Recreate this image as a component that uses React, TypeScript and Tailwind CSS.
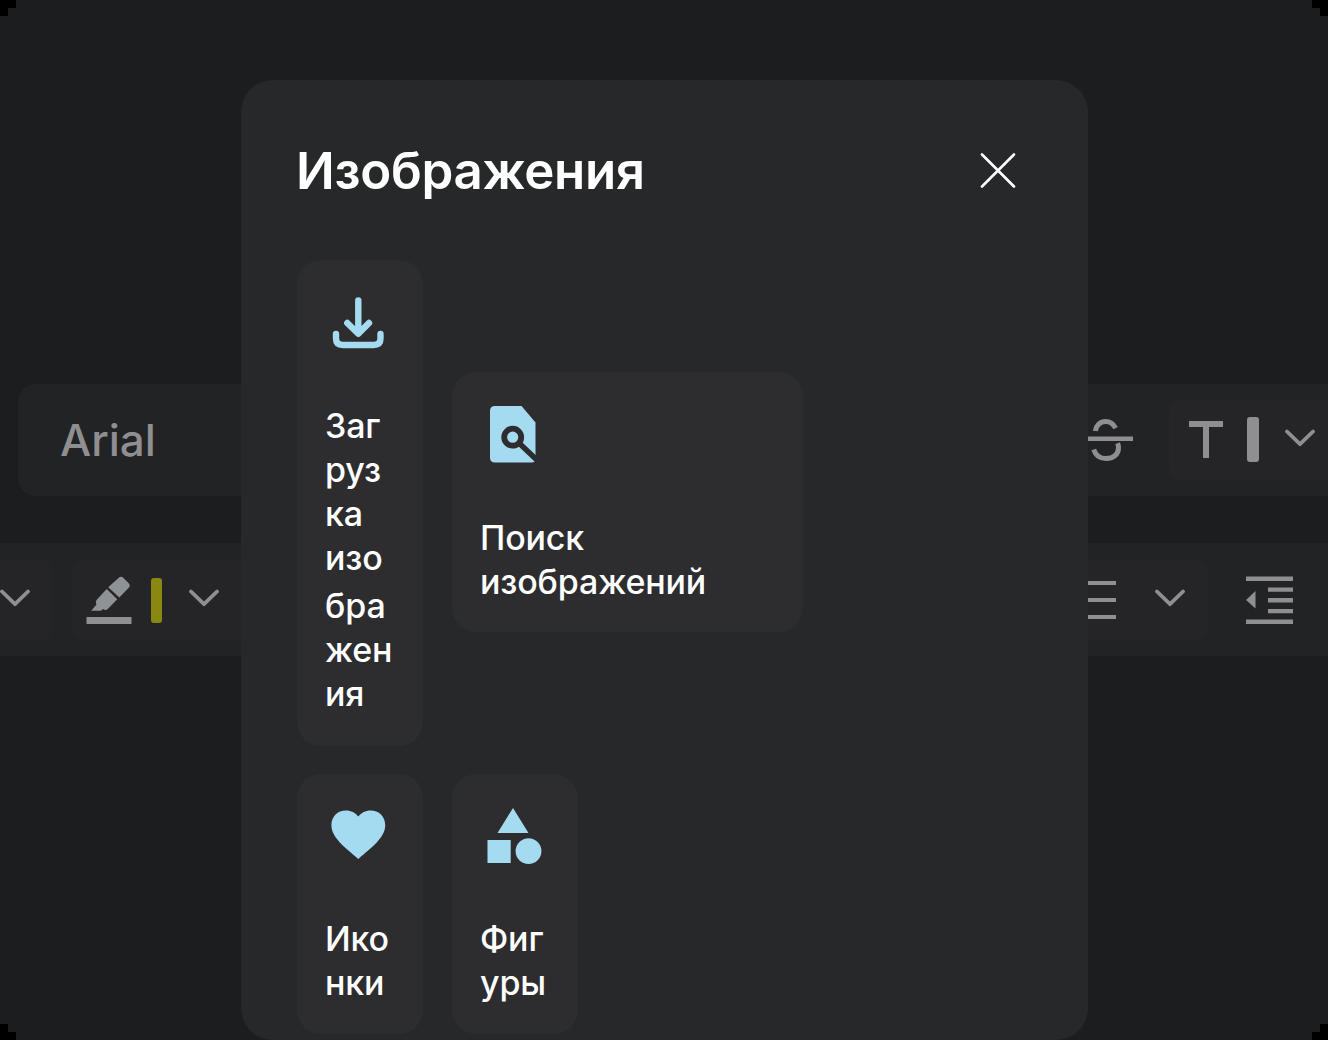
import type { ReactNode } from "react";

const Chevron = () => (
  <svg className="h-[18px] w-[32px] shrink-0" viewBox="0 0 32 18" fill="none" stroke="#8f8f91" strokeWidth="3.8" strokeLinecap="round" strokeLinejoin="round">
    <path d="M3 2.500 16 15.200 29 2.500" />
  </svg>
);

const Strike = () => (
  <svg className="mb-[3px] h-[48px] w-[50px] shrink-0" viewBox="0 0 50 48" fill="none" stroke="#8f8f91" strokeWidth="5">
    <path d="M0 23.700h50" strokeWidth="4.500" />
    <path d="M12.300 16c.8-5.600 5-9.500 10.200-9.500 4.600 0 7.800 2.200 10.100 6.600M10.700 34.500c1.800 5.500 6.300 9.100 12.300 9.100 7.400 0 12.500-4.300 12.500-10.600 0-1.800-.3-3.300-.9-4.800" />
  </svg>
);

const LetterT = () => (
  <svg className="h-[37px] w-[34px] shrink-0" viewBox="0 0 34 37" fill="#8f8f91">
    <path d="M0 0h34v6H20v31h-6V6H0z" />
  </svg>
);

const Marker = () => (
  <svg className="h-[48px] w-[46px] shrink-0" viewBox="0 0 46 48">
    <path d="M32.500 2a3.500 3.500 0 0 1 5 0l5 5a3.500 3.500 0 0 1 0 5L33.300 21.500 22.200 11.300z" fill="#8f9294" />
    <path d="M20.700 13 31.300 23.300 22 32.800q-2.500 2.300-5 .2L15 34.700H5.200l5.300-6.300q-1.600-2.800.7-5.200z" fill="#8f9294" />
    <path d="M.5 41h45v7H.5z" fill="#8f8f91" />
  </svg>
);

const Outdent = () => (
  <svg className="h-[48px] w-[47px] shrink-0" viewBox="0 0 47 48" fill="#8f8f91">
    <path d="M0 .500h47V5H0zM22 11.500h25v4.200H22zM22 22h25v4.500H22zM22 33h25v4.200H22zM0 43.500h47V48H0zM0 24l9.500-9v17.500z" />
  </svg>
);

const DownloadIcon = () => (
  <svg className="h-[60px] w-[60px]" viewBox="0 0 60 60" fill="none" stroke="#a5dbf1" strokeWidth="6.400" strokeLinecap="round" strokeLinejoin="round">
    <path d="M30.300 8.500V40M19.300 31 30.300 41.800 41 31M8 42v4.500q0 6.500 7 6.500h30.500q7 0 7-6.500V42" />
    <path d="M25 37h10.500l-5.200 5z" fill="#a5dbf1" strokeWidth="2" />
  </svg>
);

const PageSearchIcon = () => (
  <svg className="h-[60px] w-[60px]" viewBox="0 0 60 60">
    <path d="M12 2h26.500L52.500 18.500V55q0 3.500-4 3.500H12q-5 0-5-5V7q0-5 5-5z" fill="#a5dbf1" />
    <circle cx="29.700" cy="33.200" r="8.500" fill="none" stroke="#2d2d2f" strokeWidth="5.800" />
    <path d="m36 39 20 19" stroke="#2d2d2f" strokeWidth="5.500" />
  </svg>
);

const HeartIcon = () => (
  <svg className="h-[60px] w-[60px]" viewBox="0 0 60 60" fill="#a5dbf1">
    <path d="M30.300 57C17 45 3.400 36 3.400 23 3.400 14.500 9.600 8.500 18 8.500c5 0 9.500 2.200 12.300 6C33.200 10.700 37.700 8.500 42.500 8.500 51 8.500 57.200 14.500 57.200 23c0 13-13.500 22-26.900 34z" />
  </svg>
);

const ShapesIcon = () => (
  <svg className="h-[60px] w-[60px] overflow-visible" viewBox="0 0 60 60" fill="#a5dbf1">
    <path d="M30 6 45.500 31h-31zM4.500 38h23.200v23H4.500z" />
    <circle cx="45.500" cy="49.200" r="12.900" />
  </svg>
);

type TileProps = { icon: ReactNode; lines: string[]; className: string; labelClass: string };

const Tile = ({ icon, lines, className, labelClass }: TileProps) => (
  <button className={`flex flex-col items-start rounded-[24px] bg-[#2d2d2f] px-[28px] text-left text-[34px] font-[450] leading-[44px] tracking-[-0.15px] text-white ${className}`}>
    <span className="ml-[3px] flex">{icon}</span>
    <span className={`flex flex-col whitespace-nowrap ${labelClass}`}>
      {lines.map((line) => (
        <span key={line} className={line === "бра" ? "pt-[4px]" : ""}>
          {line}
        </span>
      ))}
    </span>
  </button>
);

export default function App() {
  return (
    <main className="relative h-[1040px] w-[1328px] overflow-hidden bg-[#1c1d1e] font-['Inter',sans-serif]">
      <div className="flex flex-col gap-[47px] pt-[384px]">
        <div className="flex h-[112px] justify-between pl-[18px]">
          <div className="flex w-[400px] items-center rounded-[18px] bg-[#222325] pl-[42px] text-[44px] font-[450] text-[#8f8f91]">
            Arial
          </div>
          <div className="flex w-[328px] items-center bg-[#222325] pl-[83px]">
            <Strike />
            <div className="ml-[36px] flex h-[80px] grow items-center rounded-l-[10px] bg-[#252527] pb-[1px] pl-[20px]">
              <LetterT />
              <span className="ml-[24px] h-[45px] w-[12px] shrink-0 rounded-[3px] bg-[#8f8f91]" />
              <span className="mb-[4px] ml-[25px] flex">
                <Chevron />
              </span>
            </div>
          </div>
        </div>
        <div className="flex h-[113px] items-center justify-between bg-[#222325]">
          <div className="flex items-center gap-[20px]">
            <div className="flex h-[80px] w-[52px] items-center rounded-r-[10px] bg-[#252527] pb-[3px]">
              <span className="ml-[-1px] flex">
                <Chevron />
              </span>
            </div>
            <div className="flex h-[80px] w-[240px] items-center rounded-[10px] bg-[#252527] pl-[14px] pt-[1px]">
              <Marker />
              <span className="ml-[19px] h-[45px] w-[11px] rounded-[3px] bg-[#8b8812]" />
              <span className="mb-[4px] ml-[26px] flex">
                <Chevron />
              </span>
            </div>
          </div>
          <div className="flex items-center pr-[35px]">
            <div className="mr-[38px] flex h-[80px] w-[160px] items-center justify-end rounded-[10px] bg-[#252527] pr-[22px] pt-[1px]">
              <div className="mr-[38px] flex w-[40px] flex-col gap-[13px]">
                <span className="h-[4px] bg-[#8f8f91]" />
                <span className="h-[4px] bg-[#8f8f91]" />
                <span className="h-[4px] bg-[#8f8f91]" />
              </div>
              <span className="mb-[4px] flex">
                <Chevron />
              </span>
            </div>
            <Outdent />
          </div>
        </div>
      </div>

      <section className="absolute left-[241px] top-[80px] flex h-[960px] w-[847px] flex-col rounded-[32px] bg-[#27282a] px-[56px]">
        <header className="flex h-[180px] items-center justify-between pr-[16px]">
          <h1 className="ml-[-1px] pt-[1px] text-[51px] font-semibold leading-[60px] tracking-[-0.3px] text-white">Изображения</h1>
          <svg className="h-[36px] w-[36px]" viewBox="0 0 36 36" fill="none" stroke="#fff" strokeWidth="2.600" strokeLinecap="round">
            <path d="m2 2.500 32 32M34 2.500 2 34.500" />
          </svg>
        </header>
        <div className="flex items-center gap-[29px]">
          <Tile className="h-[486px] w-[126px] pt-[32px]" labelClass="mt-[52px]" icon={<DownloadIcon />} lines={["Заг", "руз", "ка", "изо", "бра", "жен", "ия"]} />
          <Tile className="mb-[2px] h-[260px] w-[351px] pt-[32px]" labelClass="mt-[52px]" icon={<PageSearchIcon />} lines={["Поиск", "изображений"]} />
        </div>
        <div className="mt-[28px] flex gap-[29px]">
          <Tile className="h-[260px] w-[126px] pt-[28px]" labelClass="mt-[55px]" icon={<HeartIcon />} lines={["Ико", "нки"]} />
          <Tile className="h-[260px] w-[126px] pt-[28px]" labelClass="mt-[55px]" icon={<ShapesIcon />} lines={["Фиг", "уры"]} />
        </div>
      </section>

      <i className="absolute left-0 top-0 h-[8px] w-[16px] bg-black" />
      <i className="absolute left-0 top-0 h-[16px] w-[8px] bg-black" />
      <i className="absolute right-0 top-0 h-[8px] w-[16px] bg-black" />
      <i className="absolute right-0 top-0 h-[16px] w-[8px] bg-black" />
      <i className="absolute bottom-0 left-0 h-[8px] w-[16px] bg-black" />
      <i className="absolute bottom-0 left-0 h-[16px] w-[8px] bg-black" />
      <i className="absolute bottom-0 right-0 h-[8px] w-[16px] bg-black" />
      <i className="absolute bottom-0 right-0 h-[16px] w-[8px] bg-black" />
    </main>
  );
}
